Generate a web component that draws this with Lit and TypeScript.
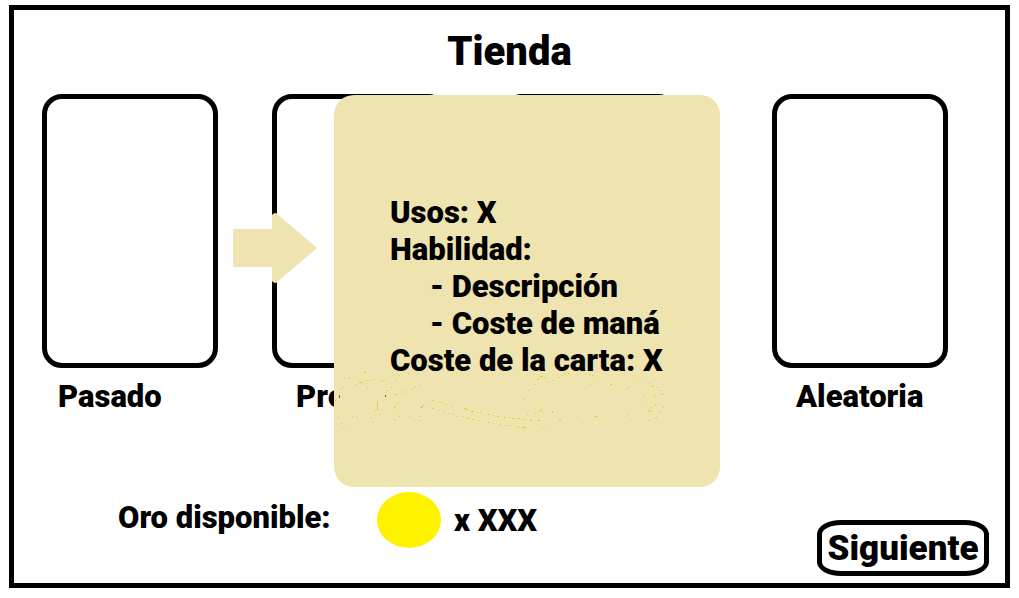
import { LitElement, html, svg, css } from "lit";
import { customElement } from "lit/decorators.js";

interface Card {
  label: string;
  kind: string;
}

const CARDS: Card[] = [
  { label: "Pasado", kind: "first" },
  { label: "Presente", kind: "" },
  { label: "", kind: "" },
  { label: "Aleatoria", kind: "last" },
];

// Green dust on the detail panel: x,y with an optional run length.
const DUST = `1,40 3,57 6,29 9,27 10,18 15,17 7,63 8,68 15,68 18,56 22,57 22,24 25,22,3 28,23 30,12,2
32,20 35,20 33,27 40,19 41,50 45,54 37,57 39,62 47,21 49,20 51,19 53,30 57,27 59,14 61,20 61,34,3 65,15
71,31 71,32 74,13 78,29 80,27 81,26 86,25 64,42 62,43 60,46 60,47 60,54 60,59 65,56 75,56 86,56 85,60
89,45 92,46 98,40,2 98,48,2 104,42 106,42 109,43 112,44 105,50 110,52 114,53 118,46 118,54 123,56
130,48,2 132,49,2 129,56 133,58,2 138,59,2 137,51,3 143,52 146,52 145,60 154,54,2 154,62,2 159,55
163,56,2 159,63 166,64 171,65 174,65 170,57,2 175,57 178,58 181,58 184,58,2 188,59 191,59 196,60,2
203,60,3 183,66 185,67 188,67,4 208,67 212,66 193,54 201,53 205,51 206,50 207,49 208,51 218,51 218,52
225,59 226,60 243,57 260,56,3 293,54 296,59 190,39 195,30 201,24 203,19 204,18 206,16,3 210,17 213,21
218,20 224,17 228,15 231,14 234,13,2 251,14 256,14 258,15 260,20 256,24 276,24,2 280,25 291,29 293,28
295,27 303,20 311,20 315,23 318,26,2 323,27 326,30 328,33 328,34 309,35 320,35 321,37 311,42 321,44
320,45 317,47 329,47 314,51 315,50 317,50 316,51 326,51 325,53 322,57 320,58 316,59 314,60`
  .split(/\s+/)
  .map((entry) => entry.split(",").map(Number));

@customElement("app-root")
export class AppRoot extends LitElement {
  static styles = css`
    :host {
      display: block;
      background: #fff;
      color: #000;
      font: 900 31px/37px Roboto, "Open Sans", sans-serif;
    }
    * {
      box-sizing: border-box;
    }
    .page {
      min-height: 100vh;
      padding: 5px 9px 10px;
      display: flex;
    }
    .frame {
      flex: 1;
      min-width: 0;
      border: 5px solid #000;
      display: flex;
      flex-direction: column;
    }
    .title {
      margin: 0;
      padding: 18px 0;
      text-align: center;
      font: inherit;
      font-size: 40px;
      line-height: 48px;
    }
    .shop {
      position: relative;
      display: flex;
      gap: 54px;
      padding: 0 57px 0 28px;
    }
    .card {
      flex: 0 1 176px;
      min-width: 0;
    }
    .card.last {
      margin-left: auto;
    }
    .slot {
      display: block;
      width: 100%;
      aspect-ratio: 176 / 274;
      padding: 0;
      border: 5px solid #000;
      border-radius: 20px;
      background: #fff;
    }
    .label {
      margin: 10px 0 0;
      padding-left: 24px;
    }
    .first .label {
      padding-left: 16px;
    }
    .arrow {
      position: absolute;
      left: 219px;
      top: 119px;
      width: 84px;
      height: 70px;
      fill: #efe3af;
    }
    .detail {
      position: absolute;
      left: 320px;
      top: 1px;
      width: 386px;
      height: 392px;
      padding: 99px 0 0 56px;
      border-radius: 20px;
      background: #efe3af;
      white-space: nowrap;
    }
    .detail p,
    .detail ul {
      margin: 0;
    }
    .detail ul {
      padding-left: 40px;
      list-style: none;
    }
    .dust {
      position: absolute;
      left: 0;
      top: 265px;
      width: 386px;
      height: 80px;
      fill: #b5e61d;
    }
    .footer {
      margin-top: auto;
      padding: 0 16px 7px 104px;
      display: flex;
      justify-content: space-between;
      align-items: flex-end;
    }
    .gold {
      display: flex;
      align-items: center;
      margin-bottom: 28px;
    }
    .gold-label {
      width: 259px;
      padding-bottom: 6px;
    }
    .coin {
      width: 64px;
      height: 56px;
      margin-right: 13px;
      border-radius: 50%;
      background: #fff200;
    }
    .next {
      width: 172px;
      height: 56px;
      padding: 0;
      border: 5px solid #000;
      border-radius: 24px / 14px;
      background: #fff;
      color: inherit;
      font: inherit;
      font-size: 35px;
      white-space: nowrap;
    }
  `;

  private renderCard(card: Card, index: number) {
    return html`<div class="card ${card.kind}">
      <button class="slot" aria-label=${card.label || `Carta ${index + 1}`}></button>
      ${card.label ? html`<p class="label">${card.label}</p>` : ""}
    </div>`;
  }

  render() {
    return html`
      <div class="page">
        <main class="frame">
          <h1 class="title">Tienda</h1>
          <section class="shop">
            ${CARDS.map((card, i) => this.renderCard(card, i))}
            <svg class="arrow" viewBox="0 0 84 70" aria-hidden="true">
              <path d="M1 16H39V2Q40 0 43 0L84 35L43 70Q40 70 39 68V54H1L0 53V17Z" />
            </svg>
            <aside class="detail">
              <p>Usos: X</p>
              <p>Habilidad:</p>
              <ul>
                <li>- Descripción</li>
                <li>- Coste de maná</li>
              </ul>
              <p>Coste de la carta: X</p>
              <svg class="dust" viewBox="0 0 386 80" shape-rendering="crispEdges" aria-hidden="true">
                ${DUST.map(([x, y, run = 1]) => svg`<rect x=${x} y=${y} width=${run} height="1" />`)}
                <rect x="43" y="41" width="1" height="10" fill="#e0cc3c" />
                <rect x="5" y="35" width="1" height="3" fill="#5b7310" />
                <rect x="51" y="35" width="1" height="2" fill="#6b6b10" />
                <rect x="87" y="46" width="1" height="2" fill="#7fc4a0" />
              </svg>
            </aside>
          </section>
          <footer class="footer">
            <div class="gold">
              <span class="gold-label">Oro disponible:</span>
              <span class="coin"></span>
              <span>x XXX</span>
            </div>
            <button class="next">Siguiente</button>
          </footer>
        </main>
      </div>
    `;
  }
}
